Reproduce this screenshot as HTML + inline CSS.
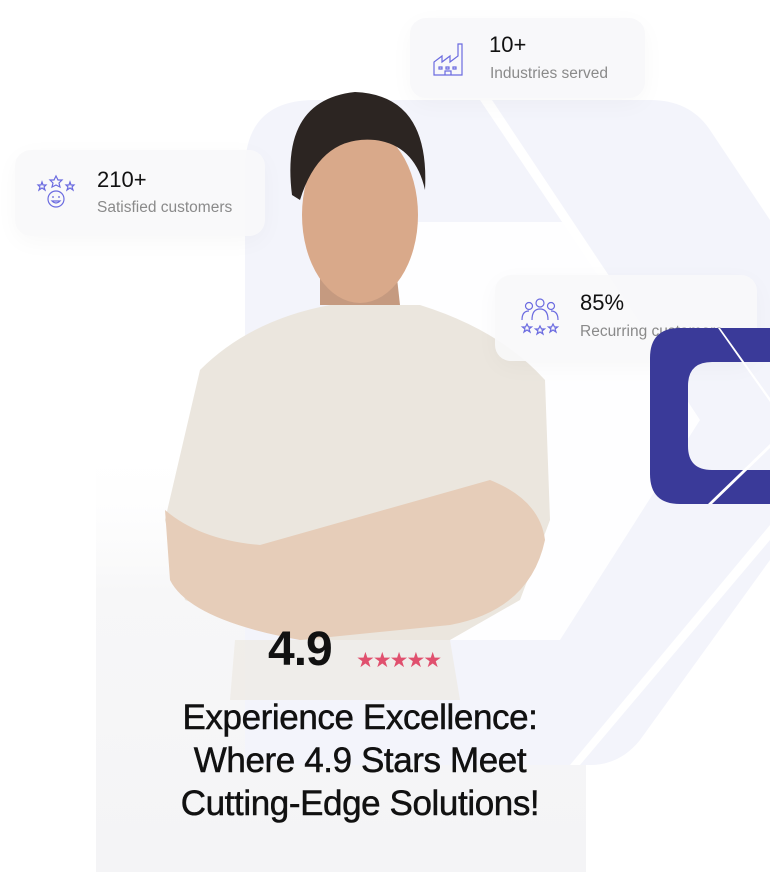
<!DOCTYPE html>
<html><head><meta charset="utf-8"><style>
*{margin:0;padding:0;box-sizing:border-box}
body{width:770px;height:872px;overflow:hidden;background:#fff;font-family:"Liberation Sans",sans-serif;position:relative}
.abs{position:absolute}
.card{position:absolute;background:#f8f8fa;border-radius:16px;box-shadow:0 6px 24px rgba(0,0,0,0.03)}
.num{position:absolute;font-size:22px;color:#111;font-weight:500}
.lbl{position:absolute;font-size:15.5px;color:#8a8a8a}
.head{position:absolute;left:95px;width:530px;text-align:center;font-size:35px;color:#111;line-height:43px;letter-spacing:-0.4px;-webkit-text-stroke:0.5px #111}
</style></head><body>
<svg class="abs" style="left:0;top:0" width="770" height="872">
 <defs><linearGradient id="g" x1="0" y1="0" x2="0" y2="1"><stop offset="0" stop-color="#fff" stop-opacity="0"/><stop offset="0.35" stop-color="#f7f7f8"/><stop offset="1" stop-color="#f4f4f6"/></linearGradient></defs>
 <rect x="96" y="440" width="490" height="432" fill="url(#g)"/>
 <path d="M245,170 Q245,100 315,100 L650,100 Q690,100 710,130 L770,220 L770,560 L640,740 Q620,765 590,765 L245,765 Z" fill="#f3f4fb"/>
 <path d="M330,222 L570,222 L700,420 L560,640 L330,640 Z" fill="#fff" opacity="0.9"/>
 <path d="M480,100 L492,100 L665,360 L655,360 Z" fill="#fff"/>
 <path d="M770,540 L580,765 L570,765 L770,525 Z" fill="#fff"/>
 <path d="M200,370 Q250,320 330,305 L420,305 Q500,330 545,380 L550,520 L520,600 L450,640 L300,640 L185,600 L165,520 Z" fill="#ebe6de"/>
 <path d="M165,510 Q200,540 260,545 L490,480 Q540,500 545,540 Q530,610 450,625 L300,640 Q190,620 170,580 Z" fill="#e6cdb9"/>
 <path d="M235,640 L450,640 L460,700 L230,700 Z" fill="#ece7e0" opacity="0.6"/>
 <path d="M320,260 L395,260 L400,305 L320,305 Z" fill="#c59a80"/>
 <ellipse cx="360" cy="215" rx="58" ry="88" fill="#d9a98a"/>
 <path d="M292,195 Q280,100 355,92 Q430,95 425,190 Q415,145 375,140 Q320,135 300,200 Z" fill="#2c2522"/>
</svg>
<div class="card" style="left:410px;top:18px;width:235px;height:80px"></div>
<div class="card" style="left:15px;top:150px;width:250px;height:86px;background:rgba(248,248,250,0.9)"></div>
<div class="card" style="left:495px;top:275px;width:262px;height:86px;background:rgba(248,248,250,0.9)"></div>
<svg class="abs" style="left:432px;top:40px" width="36" height="36" viewBox="0 0 36 36" fill="none" stroke="#6b6be0" stroke-width="1.2"><path d="M2,35 L2,22 L10,16 L10,22 L18,16 L18,22 L26,16 L26,4 L30,4 L30,35 Z M7,27h3v2h-3z M14,27h3v2h-3z M21,27h3v2h-3z M13,35v-4h6v4"/></svg>
<div class="num" style="left:489px;top:32px">10+</div>
<div class="lbl" style="left:490px;top:65px">Industries served</div>
<svg class="abs" style="left:36px;top:174px" width="40" height="40" viewBox="0 0 40 40" fill="none" stroke="#6b6be0" stroke-width="1.2"><circle cx="20" cy="25" r="8"/><path d="M16,27 Q20,31 24,27 Z M16,23h2 M22,23h2"/><path d="M20,2l2,4 4,0-3,3 1,4-4-2-4,2 1-4-3-3 4,0z M6,8l1,3 3,0-2,2 1,3-3-2-3,2 1-3-2-2 3,0z M34,8l1,3 3,0-2,2 1,3-3-2-3,2 1-3-2-2 3,0z"/></svg>
<div class="num" style="left:97px;top:167px">210+</div>
<div class="lbl" style="left:97px;top:199px">Satisfied customers</div>
<svg class="abs" style="left:519px;top:296px" width="42" height="42" viewBox="0 0 42 42" fill="none" stroke="#6b6be0" stroke-width="1.2"><circle cx="21" cy="7" r="4"/><circle cx="10" cy="10" r="3.5"/><circle cx="32" cy="10" r="3.5"/><path d="M13,24 Q13,13 21,13 Q29,13 29,24 M3,24 Q3,15 10,15 M39,24 Q39,15 32,15"/><path d="M8,28l1.5,3 3,0-2.5,2 1,3-3-2-3,2 1-3-2.5-2 3,0z M21,30l1.5,3 3,0-2.5,2 1,3-3-2-3,2 1-3-2.5-2 3,0z M34,28l1.5,3 3,0-2.5,2 1,3-3-2-3,2 1-3-2.5-2 3,0z"/></svg>
<div class="num" style="left:580px;top:290px">85%</div>
<div class="lbl" style="left:580px;top:323px">Recurring customers</div>
<svg class="abs" style="left:650px;top:328px" width="120" height="176" viewBox="0 0 120 176"><path d="M30,0 L120,0 L120,176 L30,176 Q0,176 0,146 L0,30 Q0,0 30,0 Z M62,34 Q38,34 38,58 L38,118 Q38,142 62,142 L120,142 L120,34 Z" fill="#3a3a99" fill-rule="evenodd"/><path d="M70,0 L120,70 L120,74 L68,0 Z M120,120 L62,176 L58,176 L120,116 Z" fill="#fff"/></svg>
<div class="abs" style="left:268px;top:622px;font-size:48px;font-weight:700;color:#111;letter-spacing:-1px">4.9</div>
<div class="abs" style="left:356px;top:648px;font-size:21px;color:#e0506e;letter-spacing:-2px">★★★★★</div>
<div class="head" style="top:696px">Experience Excellence:<br>Where 4.9 Stars Meet<br>Cutting-Edge Solutions!</div>
</body></html>
